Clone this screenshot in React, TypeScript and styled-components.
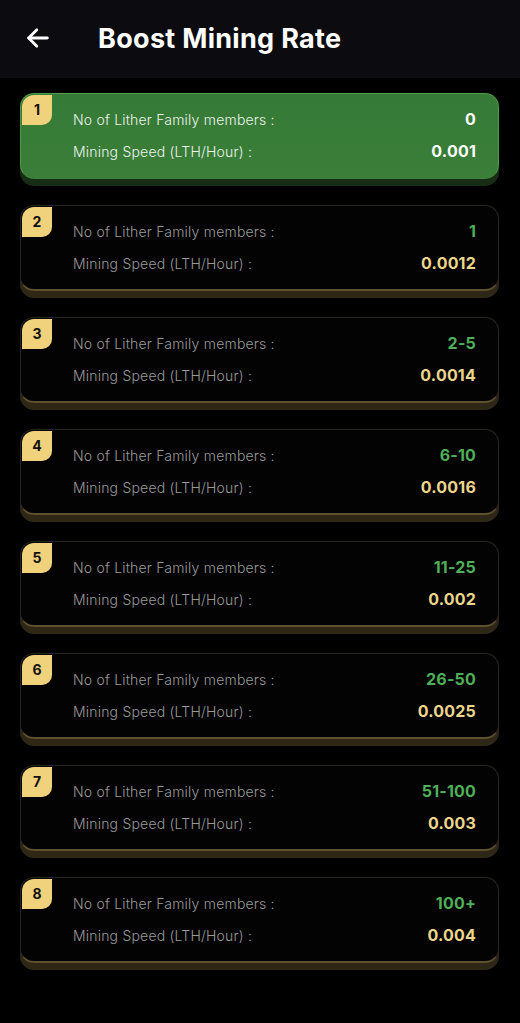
import React from "react";
import styled, { createGlobalStyle } from "styled-components";

const GlobalStyle = createGlobalStyle`
  html, body {
    margin: 0;
    padding: 0;
    background: #000;
  }
  body {
    font-family: "Inter", "Noto Sans", sans-serif;
    -webkit-font-smoothing: antialiased;
  }
`;

interface Tier {
  level: number;
  members: string;
  speed: string;
}

const tiers: Tier[] = [
  { level: 1, members: "0", speed: "0.001" },
  { level: 2, members: "1", speed: "0.0012" },
  { level: 3, members: "2-5", speed: "0.0014" },
  { level: 4, members: "6-10", speed: "0.0016" },
  { level: 5, members: "11-25", speed: "0.002" },
  { level: 6, members: "26-50", speed: "0.0025" },
  { level: 7, members: "51-100", speed: "0.003" },
  { level: 8, members: "100+", speed: "0.004" },
];

const BackArrow = () => (
  <svg width="28" height="28" viewBox="0 0 24 24" fill="none" stroke="#fff" strokeWidth="2.4" strokeLinecap="round" strokeLinejoin="round">
    <path d="M20 12H4" />
    <path d="M11 5l-7 7 7 7" />
  </svg>
);

const App = () => {
  return (
    <>
      <GlobalStyle />
      <Page>
        <Header>
          <BackButton>
            <BackArrow />
          </BackButton>
          <Title>Boost Mining Rate</Title>
        </Header>
        <List>
          {tiers.map((tier) => {
            const active = tier.level === 1;
            return (
              <Card key={tier.level} active={active}>
                <Badge>{tier.level}</Badge>
                <Row>
                  <Label active={active}>No of Lither Family members :</Label>
                  <Value active={active} kind="members">
                    {tier.members}
                  </Value>
                </Row>
                <Row>
                  <Label active={active}>Mining Speed (LTH/Hour) :</Label>
                  <Value active={active} kind="speed">
                    {tier.speed}
                  </Value>
                </Row>
              </Card>
            );
          })}
        </List>
      </Page>
    </>
  );
};

export default App;

const Page = styled.div`
  width: 520px;
  min-height: 1023px;
  background: #000;
`;

const Header = styled.div`
  height: 78px;
  display: flex;
  align-items: center;
  background: #0b0b10;
  padding: 0 0 0 24px;
  box-sizing: border-box;
`;

const BackButton = styled.div`
  width: 28px;
  height: 28px;
  display: flex;
  align-items: center;
  justify-content: center;
  margin-top: -2px;
`;

const Title = styled.h1`
  margin: -2px 0 0 46px;
  font-size: 27px;
  font-weight: 700;
  color: #fff;
  letter-spacing: 0.3px;
`;

const List = styled.div`
  display: flex;
  flex-direction: column;
  gap: 26px;
  padding: 15px 21px 0 20px;
`;

const Card = styled.div<{ active?: boolean }>`
  position: relative;
  height: 86px;
  box-sizing: border-box;
  border-radius: 14px;
  padding: 15px 22px 0 52px;
  display: flex;
  flex-direction: column;
  gap: 12px;
  background: ${(p) =>
    p.active ? "linear-gradient(180deg, #357a36 0%, #3a7e39 100%)" : "#030303"};
  border: 1.5px solid ${(p) => (p.active ? "#4f9a4c" : "#26251f")};
  border-bottom: 2.5px solid ${(p) => (p.active ? "#3e7f3c" : "#5e5030")};
  box-shadow: 0 7px 0 ${(p) => (p.active ? "#172d16" : "#2e2715")};
`;

const Badge = styled.div`
  position: absolute;
  top: 1px;
  left: 1px;
  width: 30px;
  height: 30px;
  background: #f1d27c;
  border-radius: 12px 0 10px 0;
  display: flex;
  align-items: center;
  justify-content: center;
  font-size: 14px;
  font-weight: 700;
  color: #111;
  padding-bottom: 2px;
  box-sizing: border-box;
`;

const Row = styled.div`
  display: flex;
  align-items: center;
  justify-content: space-between;
  height: 20px;
`;

const Label = styled.span<{ active?: boolean }>`
  font-size: 14px;
  font-weight: 300;
  letter-spacing: 0.2px;
  color: ${(p) => (p.active ? "#eef4ec" : "#9a9a9a")};
`;

const Value = styled.span<{ active?: boolean; kind: "members" | "speed" }>`
  font-size: 16px;
  font-weight: 700;
  letter-spacing: 0.2px;
  color: ${(p) =>
    p.active ? "#ffffff" : p.kind === "members" ? "#4fb05a" : "#ecd68c"};
`;
